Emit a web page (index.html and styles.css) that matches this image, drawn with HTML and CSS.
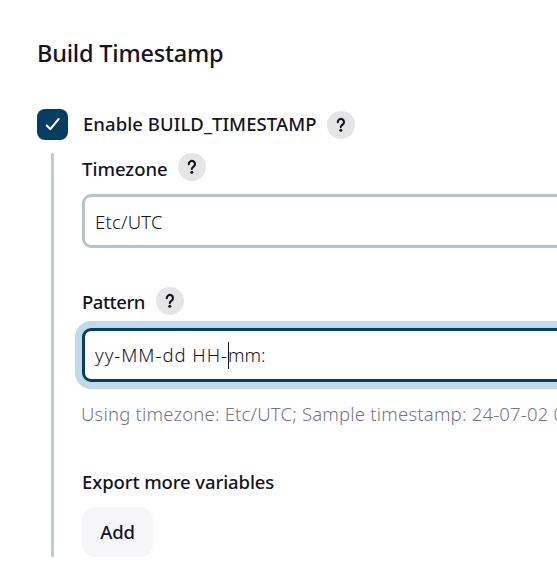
FILE: index.html
```html
<!DOCTYPE html>
<html lang="en">
<head>
<meta charset="utf-8">
<title>Build Timestamp</title>
<link rel="stylesheet" href="styles.css">
</head>
<body>
<main class="section">
  <h1 class="title"><span>Build Timestamp</span></h1>
  <div class="toggle">
    <span class="checkbox"><svg viewBox="0 0 31 31"><path d="M9.7 16.4l3.6 3.7 8.3-10"/></svg></span>
    <span class="label enable">Enable BUILD_TIMESTAMP</span>
    <span class="help"><svg viewBox="0 0 28 28"><path d="M10.8 11.2V11a3.1 3.1 0 1 1 4.8 2.6c-1 .7-1.8 1.1-1.8 2.5"/><circle cx="13.8" cy="19.3" r="1.5"/></svg></span>
  </div>
  <div class="nested">
    <div class="field-head"><span class="label timezone">Timezone</span><span class="help"><svg viewBox="0 0 28 28"><path d="M10.8 11.2V11a3.1 3.1 0 1 1 4.8 2.6c-1 .7-1.8 1.1-1.8 2.5"/><circle cx="13.8" cy="19.3" r="1.5"/></svg></span></div>
    <div class="input"><span class="zone-value">Etc/UTC</span></div>
    <div class="field-head second"><span class="label pattern">Pattern</span><span class="help"><svg viewBox="0 0 28 28"><path d="M10.8 11.2V11a3.1 3.1 0 1 1 4.8 2.6c-1 .7-1.8 1.1-1.8 2.5"/><circle cx="13.8" cy="19.3" r="1.5"/></svg></span></div>
    <div class="input focused"><span class="pattern-value"><span class="date-part">yy-MM-dd HH-</span><i class="caret"></i>mm:</span></div>
    <p class="hint">Using timezone: Etc/UTC; Sample timestamp: <span class="stamp">24-07-02 0</span></p>
    <div class="label export">Export more variables</div>
    <button class="add">Add</button>
  </div>
</main>
</body>
</html>
```
FILE: styles.css
```css
* { box-sizing: border-box; }
body {
  margin: 0;
  background: #fff;
  color: #14141f;
  font: 18.5px/26px "Noto Sans", "Open Sans", sans-serif;
  overflow: hidden;
}
.section { padding: 35px 0 0 37px; height: 586px; overflow: hidden; }
.title { margin: 0; font-size: 23.5px; line-height: 36px; font-weight: 500; letter-spacing: -0.2px; white-space: nowrap; }
.toggle { display: flex; align-items: center; height: 31px; margin-top: 38px; }
.checkbox { width: 31px; height: 31px; border-radius: 8px; background: #063e61; margin-right: 15px; }
svg { display: block; width: 100%; height: 100%; }
.checkbox path { fill: none; stroke: #fff; stroke-width: 2.1; stroke-linecap: round; stroke-linejoin: round; }
.label { font-weight: 500; white-space: nowrap; }
.enable { width: 233px; margin-top: -2px; letter-spacing: 0.07px; }
.timezone { width: 85px; }
.pattern { width: 63px; letter-spacing: -0.45px; }
.help { width: 28px; height: 28px; border-radius: 50%; background: #e5e5e5; flex: none; }
.help path { fill: none; stroke: #14141f; stroke-width: 2.1; stroke-linecap: round; }
.help circle { fill: #14141f; }
.toggle .help { margin-left: 11px; }
.nested {
  position: relative;
  margin: 13px 0 0 14px;
  padding-left: 31px;
  height: 404px;
}
.nested::before {
  content: "";
  position: absolute;
  left: 0;
  top: 0;
  width: 3px;
  height: 404px;
  border-radius: 2px;
  background: #c0cbd1;
}
.field-head { display: flex; height: 28px; gap: 11px; }
.field-head .label { padding-top: 3px; }
.field-head.second .label { padding-top: 2px; }
.input {
  display: flex;
  align-items: center;
  width: 600px;
  height: 54px;
  margin-top: 13px;
  padding-left: 10px;
  border: 3px solid #b6c3c9;
  border-radius: 9px;
  white-space: nowrap;
  font-weight: 300;
}
.zone-value { padding-top: 1px; letter-spacing: 0.25px; }
.second { margin-top: 39px; }
.focused { border-color: #063e61; box-shadow: 0 0 0 7px #c2d9e7; }
.date-part { letter-spacing: 0.98px; }
.caret { display: inline-block; width: 1px; height: 27px; margin-right: -1px; background: #14141f; vertical-align: -7px; }
.hint { margin: 19px 0 0 -1px; color: #77738c; font-weight: 300; white-space: nowrap; letter-spacing: 0.2px; }
.stamp { letter-spacing: 0.2px; }
.export { margin-top: 42px; letter-spacing: -0.1px; }
.add {
  display: block;
  width: 71px;
  height: 50px;
  margin-top: 12px;
  padding: 0;
  border: 0;
  border-radius: 13px;
  background: #f6f6f9;
  color: inherit;
  font: inherit;
  font-weight: 500;
  letter-spacing: -0.2px;
}
```
